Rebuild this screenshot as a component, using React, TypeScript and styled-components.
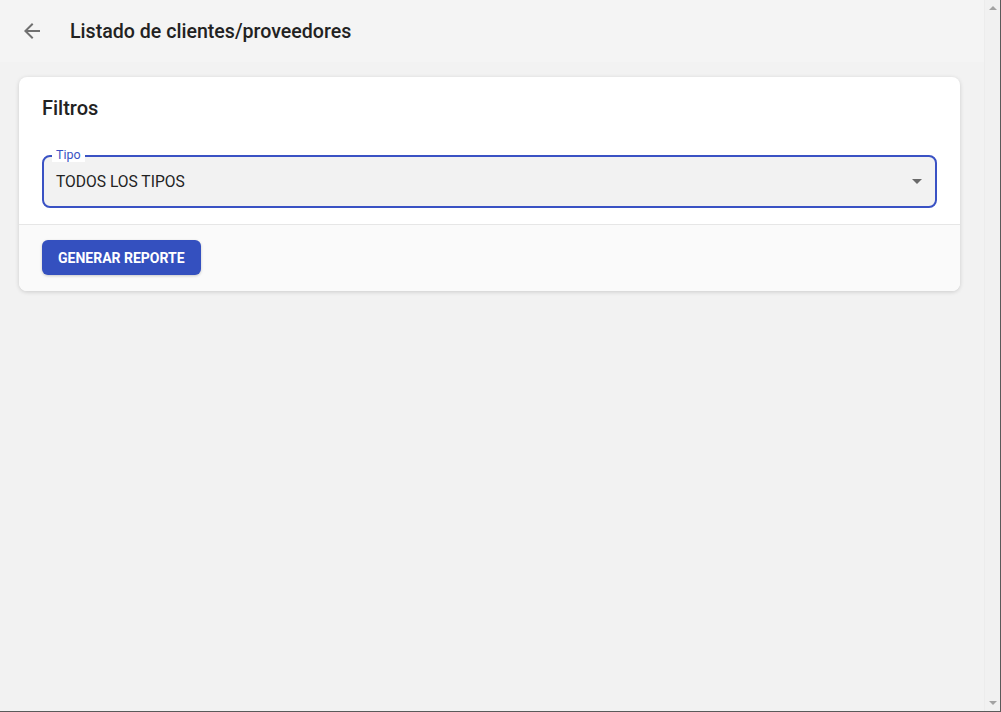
import React from "react";
import styled, { createGlobalStyle } from "styled-components";

const Global = createGlobalStyle`
  html, body { margin: 0; padding: 0; }
  body {
    background: #f2f2f2;
    font-family: Roboto, "Liberation Sans", Arial, sans-serif;
    overflow: hidden;
  }
`;

const Frame = styled.div`
  width: 1001px;
  height: 712px;
  box-sizing: border-box;
  display: flex;
  border-right: 1px solid #5a5a5a;
  border-bottom: 1px solid #5a5a5a;
  background: #f2f2f2;
`;

const Main = styled.div`
  flex: 1;
  display: flex;
  flex-direction: column;
  min-width: 0;
`;

const Header = styled.header`
  height: 62px;
  display: flex;
  align-items: center;
  background: #f4f4f4;
  padding-left: 20px;
  gap: 26px;
`;

const BackButton = styled.button`
  border: 0;
  background: transparent;
  padding: 0;
  width: 24px;
  height: 24px;
  display: flex;
  align-items: center;
  justify-content: center;
  color: #707070;
  cursor: pointer;
`;

const Title = styled.h1`
  margin: 0;
  font-size: 19.6px;
  font-weight: 500;
  color: #222;
`;

const Content = styled.div`
  padding: 15px 24px 0 19px;
`;

const Card = styled.section`
  background: #fff;
  border-radius: 8px;
  box-shadow: 0 1px 4px rgba(0, 0, 0, 0.16);
  overflow: hidden;
`;

const CardBody = styled.div`
  padding: 17px 23px 16px 23px;
`;

const CardTitle = styled.h2`
  margin: 0 0 33px 0;
  font-size: 20px;
  font-weight: 500;
  color: #222;
  line-height: 28px;
`;

const Field = styled.div`
  position: relative;
  height: 53px;
  box-sizing: border-box;
  border: 2px solid #3a52c4;
  border-radius: 8px;
  background: #f2f2f2;
  display: flex;
  align-items: center;
  padding: 0 12px;
`;

const FieldLabel = styled.span`
  position: absolute;
  top: -9px;
  left: 8px;
  padding: 0 4px;
  background: #fff;
  font-size: 12.5px;
  line-height: 14px;
  color: #3a52c4;
`;

const FieldValue = styled.span`
  flex: 1;
  font-size: 15.6px;
  color: #222;
  padding-top: 1px;
`;

const Caret = styled.span`
  width: 0;
  height: 0;
  border-left: 5px solid transparent;
  border-right: 5px solid transparent;
  border-top: 5px solid #6a6a6a;
  margin-right: 1px;
`;

const CardFooter = styled.div`
  border-top: 1px solid #e6e6e6;
  background: #fafafa;
  padding: 15px 23px 16px 23px;
`;

const PrimaryButton = styled.button`
  height: 35px;
  padding: 0 16px;
  border: 0;
  border-radius: 6px;
  background: #3450bf;
  color: #fff;
  font-family: Roboto, "Liberation Sans", Arial, sans-serif;
  font-size: 14px;
  font-weight: 700;
  box-shadow: 0 1px 3px rgba(0, 0, 0, 0.2);
  cursor: pointer;
`;

const Scrollbar = styled.div`
  width: 16px;
  background: #f1f1f1;
  border-left: 1px solid #ececec;
  display: flex;
  flex-direction: column;
  justify-content: space-between;
  align-items: center;
  padding: 6px 0;
  box-sizing: border-box;
`;

const ScrollArrow = styled.span<{ $dir: "up" | "down" }>`
  width: 0;
  height: 0;
  border-left: 4px solid transparent;
  border-right: 4px solid transparent;
  ${(p) =>
    p.$dir === "up"
      ? "border-bottom: 4px solid #a3a3a3;"
      : "border-top: 4px solid #a3a3a3;"}
`;

export default function App() {
  return (
    <>
      <Global />
      <Frame>
        <Main>
          <Header>
            <BackButton aria-label="Volver">
              <svg width="24" height="24" viewBox="0 0 24 24" fill="currentColor">
                <path d="M20 11H7.83l5.59-5.59L12 4l-8 8 8 8 1.41-1.41L7.83 13H20v-2z" />
              </svg>
            </BackButton>
            <Title>Listado de clientes/proveedores</Title>
          </Header>
          <Content>
            <Card>
              <CardBody>
                <CardTitle>Filtros</CardTitle>
                <Field>
                  <FieldLabel>Tipo</FieldLabel>
                  <FieldValue>TODOS LOS TIPOS</FieldValue>
                  <Caret />
                </Field>
              </CardBody>
              <CardFooter>
                <PrimaryButton>GENERAR REPORTE</PrimaryButton>
              </CardFooter>
            </Card>
          </Content>
        </Main>
        <Scrollbar>
          <ScrollArrow $dir="up" />
          <ScrollArrow $dir="down" />
        </Scrollbar>
      </Frame>
    </>
  );
}
